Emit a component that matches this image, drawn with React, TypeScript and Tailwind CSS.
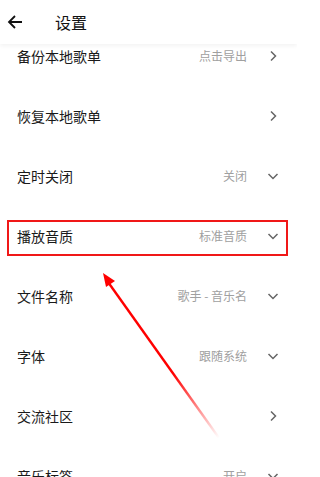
import React from 'react';

type Row = {
  label: string;
  value?: string;
  kind: 'right' | 'down';
  marked?: boolean;
};

const ROWS: Row[] = [
  { label: '备份本地歌单', value: '点击导出', kind: 'right' },
  { label: '恢复本地歌单', kind: 'right' },
  { label: '定时关闭', value: '关闭', kind: 'down' },
  { label: '播放音质', value: '标准音质', kind: 'down', marked: true },
  { label: '文件名称', value: '歌手 - 音乐名', kind: 'down' },
  { label: '字体', value: '跟随系统', kind: 'down' },
  { label: '交流社区', kind: 'right' },
  { label: '音乐标签', value: '开启', kind: 'down' },
];

function Chevron({ kind }: { kind: Row['kind'] }) {
  return (
    <svg width="12" height="12" viewBox="0 0 12 12" className="text-[#666]">
      {kind === 'right' ? (
        <path d="M4 1.5 L8.5 6 L4 10.5" fill="none" stroke="currentColor" strokeWidth="1.5" />
      ) : (
        <path d="M1.5 4 L6 8.5 L10.5 4" fill="none" stroke="currentColor" strokeWidth="1.5" />
      )}
    </svg>
  );
}

function SettingRow({ row }: { row: Row }) {
  return (
    <div className="relative h-[60px] flex items-center pl-[17px] pr-[18px]">
      <span className="text-[14px] text-[#1a1a1a] leading-none">{row.label}</span>
      <div className="ml-auto flex items-center gap-[20px]">
        {row.value && <span className="text-[12px] text-[#a0a0a0] leading-none">{row.value}</span>}
        <Chevron kind={row.kind} />
      </div>
      {row.marked && (
        <div className="absolute left-[7px] right-[9px] top-[14px] h-[36px] border-2 border-[#f01818] pointer-events-none" />
      )}
    </div>
  );
}

export default function App() {
  return (
    <div
      className="relative w-[297px] h-[477px] overflow-hidden bg-white"
      style={{ fontFamily: '"Noto Sans CJK SC", "Noto Sans", sans-serif' }}
    >
      <div className="relative z-10 h-[44px] bg-white flex items-center shadow-[0_2px_4px_rgba(0,0,0,0.05)]">
        <svg width="16" height="16" viewBox="0 0 16 16" className="ml-[7px]">
          <path d="M15 8 H2 M8 2 L2 8 L8 14" fill="none" stroke="#111" strokeWidth="1.8" />
        </svg>
        <span className="ml-[32px] text-[16px] text-[#111] leading-none">设置</span>
      </div>

      <div className="-mt-[18px]">
        {ROWS.map((row) => (
          <SettingRow key={row.label} row={row} />
        ))}
      </div>

      <svg className="absolute inset-0 z-20 pointer-events-none" width="297" height="477" viewBox="0 0 297 477">
        <defs>
          <linearGradient id="fade" gradientUnits="userSpaceOnUse" x1="105" y1="276" x2="219" y2="438">
            <stop offset="0" stopColor="#f00" stopOpacity="1" />
            <stop offset="0.6" stopColor="#f00" stopOpacity="1" />
            <stop offset="1" stopColor="#f00" stopOpacity="0" />
          </linearGradient>
        </defs>
        <path d="M108 282 L219 438" stroke="url(#fade)" strokeWidth="2.4" fill="none" />
        <path d="M103 273 L115 281 L106 287 Z" fill="#f00" />
      </svg>
    </div>
  );
}
